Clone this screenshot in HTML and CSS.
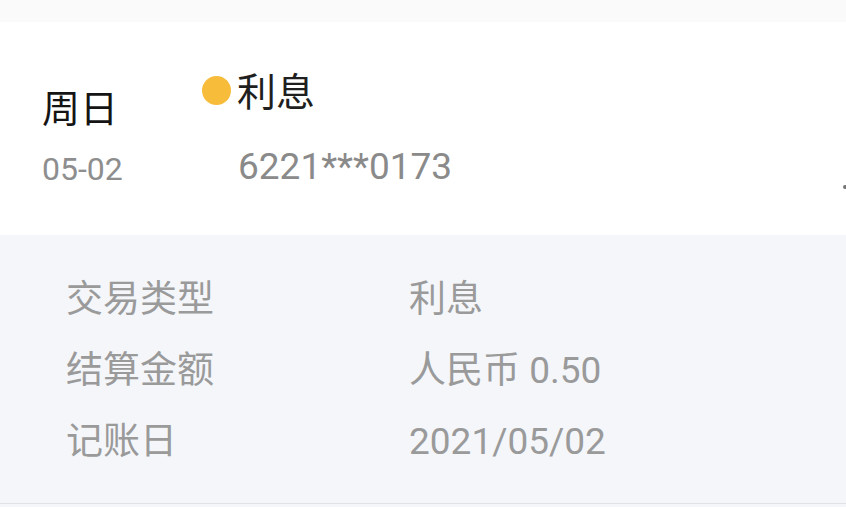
FILE: index.html
```html
<!DOCTYPE html>
<html lang="zh-CN">
<head>
	<meta charset="UTF-8">
	<title>交易明细</title>
	<link rel="stylesheet" href="styles.css">
</head>
<body>
	<div class="top"></div>
	<section class="card">
		<div class="date">
			<p class="week">周日</p>
			<p class="day">05-02</p>
		</div>
		<div class="info">
			<h2><span class="dot"></span>利息</h2>
			<p class="account">6221***0173</p>
		</div>
		<span class="arrow"></span>
	</section>
	<section class="detail">
		<ul>
			<li><span class="label">交易类型</span><span class="value">利息</span></li>
			<li><span class="label">结算金额</span><span class="value">人民币 0.50</span></li>
			<li><span class="label">记账日</span><span class="value">2021/05/02</span></li>
		</ul>
	</section>
	<div class="bottom"></div>
</body>
</html>
```

FILE: styles.css
```css
body, section, div, ul, li, h2, p {
	margin: 0;
	padding: 0;
}

body {
	font-family: Roboto, "Noto Sans CJK SC", sans-serif;
	background-color: #f4f6fa;
	overflow: hidden;
}

.top {
	height: 22px;
	background-color: #fafafb;
}

.card {
	height: 213px;
	background-color: #fff;
	display: flex;
	position: relative;
}

.date {
	width: 160px;
	padding: 68px 0 0 42px;
}

.week {
	font-size: 38px;
	line-height: 38px;
	color: #141414;
}

.day {
	margin-top: 25px;
	font-size: 32px;
	line-height: 32px;
	color: #8e8e8e;
}

.info {
	padding-top: 52px;
}

.info h2 {
	display: flex;
	align-items: flex-start;
	font-size: 39px;
	line-height: 39px;
	font-weight: normal;
	color: #1f1f1f;
}

.dot {
	width: 29px;
	height: 29px;
	border-radius: 50%;
	background-color: #f8bc3b;
	margin: 2px 6px 0 0;
}

.account {
	margin: 35px 0 0 36px;
	font-size: 37px;
	line-height: 37px;
	color: #8a8a8a;
}

.arrow {
	position: absolute;
	right: 0;
	top: 163px;
	width: 3px;
	height: 4px;
	background-color: #777;
	border-radius: 2px 0 0 2px;
}

.detail {
	height: 268px;
	padding-top: 29px;
	box-sizing: border-box;
	background-color: #f4f6fa;
}

.detail li {
	list-style-type: none;
	display: flex;
	padding-left: 66px;
	font-size: 37px;
	line-height: 71px;
	height: 71px;
	color: #9a9a9a;
}

.label {
	width: 343px;
}

.bottom {
	height: 1px;
	background-color: #dfe2e7;
}
```
